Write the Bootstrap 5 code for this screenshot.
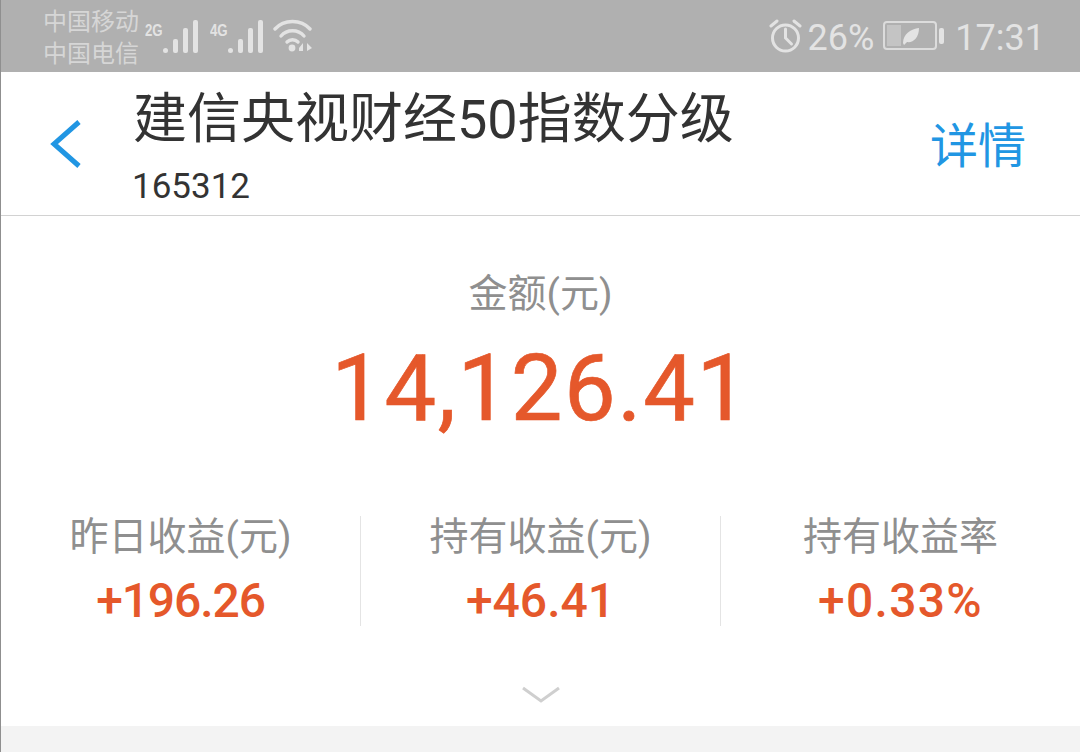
<!DOCTYPE html>
<html lang="zh-CN">
<head>
    <meta charset="UTF-8">
    <meta name="viewport" content="width=device-width, initial-scale=1.0">
    <title>建信央视财经50指数分级</title>
    <link href="https://cdn.jsdelivr.net/npm/bootstrap@5.3.0/dist/css/bootstrap.min.css" rel="stylesheet">
    <style>
        html, body { height: 752px; overflow: hidden; }
        body { font-family: Roboto, "Noto Sans CJK SC", sans-serif; background: #fff; }
        .phone { width: 1080px; height: 752px; border-left: 1px solid #8f8f8f; }
        .status-bar { height: 72px; background: #b0b0b0; color: #e3e3e3; padding: 0 35px 0 42px; }
        .carriers { font-size: 24px; line-height: 32px; color: #d6d6d6; width: 96px; white-space: nowrap; margin-top: 4px; }
        .sig-label { font-size: 17px; font-weight: 700; color: #e3e3e3; line-height: 1; align-self: flex-start; margin-top: 4px; font-family: "Liberation Sans", sans-serif; transform: scaleX(.78); transform-origin: left; width: 18px; }
        .sig-group { height: 36px; }
        .sig-first { margin-left: 6px; }
        .sig-next { margin-left: 12px; }
        .wifi-icon { margin-left: 10px; }
        .batt-text { font-size: 36px; line-height: 1; color: #e3e3e3; margin-top: 4px; }
        .alarm-gap { margin-left: 6px; }
        .batt-icon { margin-left: 9px; }
        .time-gap { margin-left: 10px; }
        .title-bar { height: 145px; border-bottom: 1px solid #d2d2d2; padding: 0 54px 0 47px; }
        .back-col { width: 85px; padding-top: 9px; }
        .fund-name { font-size: 54px; line-height: 58px; color: #333; white-space: nowrap; margin-top: 19px; }
        .fund-code { font-size: 35px; line-height: 40px; color: #333; margin-top: 18px; margin-left: -1px; }
        .detail-link { font-size: 48px; line-height: 1; color: #2196e3; text-decoration: none; margin-top: 51px; }
        .amount-box { padding-top: 56px; }
        .amount-label { font-size: 39px; line-height: 44px; color: #8f8f8f; }
        .amount-value { font-size: 92px; line-height: 108px; color: #e5582b; margin-top: 19px; letter-spacing: 1.6px; -webkit-text-stroke: .7px #e5582b; }
        .stats-row { margin-top: 73px; height: 110px; }
        .stat-cell { width: 360px; height: 110px; }
        .stat-cell:first-child { width: 359px; }
        .stat-cell + .stat-cell { border-left: 1px solid #e4e4e4; }
        .stat-label { font-size: 39px; line-height: 42px; color: #8f8f8f; }
        .stat-value { font-size: 48px; line-height: 52px; color: #e5582b; font-weight: 500; margin-top: 17px; }
        .value-tight { letter-spacing: -1.1px; }
        .value-wide { letter-spacing: 1.3px; }
        .more-box { height: 100px; padding-top: 60px; }
        .bottom-strip { height: 26px; background: #f3f3f3; }
    </style>
</head>
<body>
<div class="phone d-flex flex-column">
    <div class="status-bar d-flex align-items-center justify-content-between">
        <div class="d-flex align-items-center">
            <div class="carriers">中国移动<br>中国电信</div>
            <div class="d-flex align-items-end sig-group sig-first">
                <span class="sig-label">2G</span>
                <svg width="35" height="34" viewBox="0 0 35 34"><g fill="#e3e3e3"><rect x="0" y="28" width="5" height="5" rx="2.5"/><rect x="10" y="19" width="5" height="14" rx="2"/><rect x="20" y="8" width="5" height="25" rx="2"/><rect x="30" y="0" width="5" height="33" rx="2"/></g></svg>
            </div>
            <div class="d-flex align-items-end sig-group sig-next">
                <span class="sig-label">4G</span>
                <svg width="35" height="34" viewBox="0 0 35 34"><g fill="#e3e3e3"><rect x="0" y="28" width="5" height="5" rx="2.5"/><rect x="10" y="19" width="5" height="14" rx="2"/><rect x="20" y="8" width="5" height="25" rx="2"/><rect x="30" y="0" width="5" height="33" rx="2"/></g></svg>
            </div>
            <svg class="wifi-icon" width="40" height="34" viewBox="0 0 40 34"><g fill="none" stroke="#e3e3e3" stroke-width="3.400" stroke-linecap="round"><path d="M2 10C11 0 28 0 37 10"/><path d="M8 17C14 10 25 10 31 17"/><path d="M14 23C17 20 22 20 25 23"/></g><circle cx="19" cy="29" r="3.400" fill="#e3e3e3"/><path d="M26 29l4-5v8h-4zM34 24l5 5-5 3z" fill="#e3e3e3"/></svg>
        </div>
        <div class="d-flex align-items-center">
            <svg width="33" height="34" viewBox="0 0 33 34"><g fill="none" stroke="#e3e3e3" stroke-width="3" stroke-linecap="round"><circle cx="16.500" cy="19" r="13"/><path d="M16.500 10v9l6 6"/><path d="M2 7l6-5"/><path d="M31 7l-6-5"/></g></svg>
            <span class="batt-text alarm-gap">26%</span>
            <svg class="batt-icon" width="62" height="30" viewBox="0 0 62 30"><rect x="1" y="1" width="52" height="27" rx="3" fill="none" stroke="#dcdcdc" stroke-width="2"/><rect x="4" y="4" width="14" height="21" fill="#c4c4c4"/><path d="M20 22C20 13 28 8 36 7C36 17 30 22 24 21L21 24Z" fill="#e3e3e3"/><rect x="56" y="7" width="5" height="16" rx="2" fill="#e3e3e3"/></svg>
            <span class="batt-text time-gap">17:31</span>
        </div>
    </div>

    <div class="title-bar d-flex align-items-start justify-content-between">
        <div class="d-flex">
            <div class="back-col d-flex align-items-center">
                <svg width="34" height="50" viewBox="0 0 34 50"><path d="M31 3L6 25L31 47" fill="none" stroke="#2196e3" stroke-width="5"/></svg>
            </div>
            <div>
                <div class="fund-name">建信央视财经50指数分级</div>
                <div class="fund-code">165312</div>
            </div>
        </div>
        <a href="#" class="detail-link">详情</a>
    </div>

    <div class="amount-box text-center">
        <div class="amount-label">金额(元)</div>
        <div class="amount-value">14,126.41</div>
    </div>

    <div class="stats-row d-flex text-center">
        <div class="stat-cell">
            <div class="stat-label">昨日收益(元)</div>
            <div class="stat-value value-tight">+196.26</div>
        </div>
        <div class="stat-cell">
            <div class="stat-label">持有收益(元)</div>
            <div class="stat-value">+46.41</div>
        </div>
        <div class="stat-cell">
            <div class="stat-label">持有收益率</div>
            <div class="stat-value value-wide">+0.33%</div>
        </div>
    </div>

    <div class="more-box d-flex justify-content-center">
        <svg width="40" height="20" viewBox="0 0 40 20"><path d="M2 2L20 15L38 2" fill="none" stroke="#cfcfcf" stroke-width="3"/></svg>
    </div>
    <div class="bottom-strip flex-grow-1"></div>
</div>
<script src="https://cdn.jsdelivr.net/npm/bootstrap@5.3.0/dist/js/bootstrap.bundle.min.js"></script>
</body>
</html>
